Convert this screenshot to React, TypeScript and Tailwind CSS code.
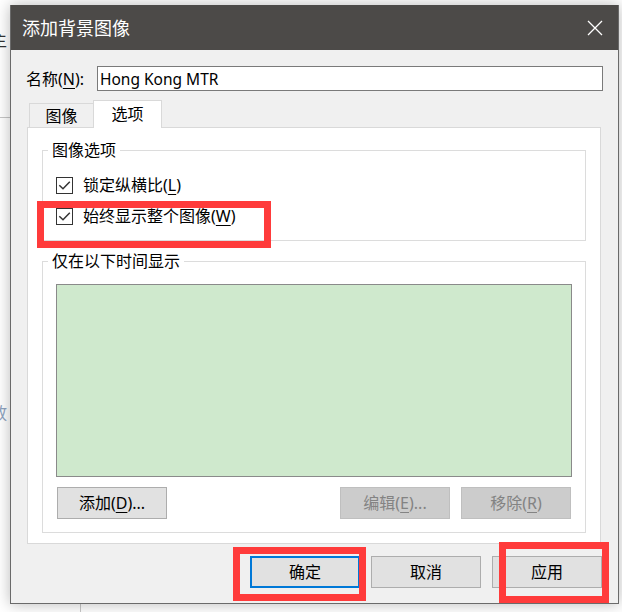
import React from "react"

const FONT = "font-['Noto_Sans','Noto_Sans_CJK_SC',sans-serif]"

function Key({ k }: { k: string }) {
  return <span className="underline decoration-1 underline-offset-[3px]">{k}</span>
}

function Check({ label }: { label: React.ReactNode }) {
  return (
    <div className="flex h-[22px] items-center">
      <svg width="17" height="17" viewBox="0 0 17 17" className="shrink-0">
        <rect x="0.5" y="0.5" width="16" height="16" fill="#ffffff" stroke="#333333" />
        <path d="M3.3 8.2 L7 11.8 L13.8 4.8" fill="none" stroke="#333333" strokeWidth="1.5" />
      </svg>
      <span className="ml-[10px] text-[16px] leading-[22px] text-black">{label}</span>
    </div>
  )
}

function Btn({
  children,
  disabled,
  primary,
  className = "",
}: {
  children: React.ReactNode
  disabled?: boolean
  primary?: boolean
  className?: string
}) {
  const look = disabled
    ? "border border-[#bfbfbf] bg-[#cccccc] text-[#838383]"
    : primary
      ? "border-2 border-[#0078d7] bg-[#e1e1e1] text-black"
      : "border border-[#adadad] bg-[#e1e1e1] text-black"
  return (
    <div className={`flex h-[32px] w-[110px] items-center justify-center text-[16px] leading-[20px] ${look} ${className}`}>
      {children}
    </div>
  )
}

export default function App() {
  return (
    <div className={`relative h-[612px] w-[622px] overflow-hidden bg-white ${FONT}`}>
      {/* page behind the dialog */}
      <div className="absolute left-0 top-[117px] h-px w-[12px] bg-[#c6c6c6]" />
      <div className="absolute left-[-9px] top-[30px] text-[16px] leading-[20px] text-[#333]">主</div>
      <div className="absolute left-[-9px] top-[403px] text-[16px] leading-[20px] text-[#8fa3bf]">放</div>
      <div className="absolute left-[80px] top-[600px] h-[12px] w-px bg-[#c8c8c8]" />

      {/* dialog window */}
      <div className="absolute left-[10px] top-[5px] flex h-[599px] w-[609px] flex-col border-x border-b border-[#6a6a6a] bg-[#f0f0f0] shadow-[0_0_14px_rgba(0,0,0,0.28)]">
        {/* title bar */}
        <div className="flex h-[45px] shrink-0 items-center bg-[#4c4a48] pl-[11px] pr-[15px]">
          <span className="text-[18px] leading-[24px] text-white">添加背景图像</span>
          <svg className="ml-auto" width="16" height="16" viewBox="0 0 16 16">
            <path d="M1 1 L15 15 M15 1 L1 15" stroke="#ffffff" strokeWidth="1.3" fill="none" />
          </svg>
        </div>

        {/* name */}
        <div className="mt-[16px] flex h-[25px] items-center">
          <span className="ml-[15px] w-[71px] text-[16px] leading-[20px] text-black">
            名称(<Key k="N" />):
          </span>
          <div className="flex h-[25px] w-[506px] items-center border border-[#7a7a7a] bg-white pl-[2px] text-[15.5px] leading-[20px] text-black">
            Hong Kong MTR
          </div>
        </div>

        {/* tabs */}
        <div className="ml-[16px] mt-[9px] flex items-end">
          <div className="ml-[2px] flex h-[24px] w-[64px] items-center justify-center border border-b-0 border-r-0 border-[#d9d9d9] bg-[#f0f0f0] text-[16px] leading-[20px] text-black">
            图像
          </div>
          <div className="relative z-10 -mb-px flex h-[28px] w-[69px] items-center justify-center border border-b-0 border-[#d9d9d9] bg-white pb-[2px] text-[16px] leading-[20px] text-black">
            选项
          </div>
        </div>

        {/* panel */}
        <div className="ml-[16px] flex h-[417px] w-[574px] flex-col border border-[#d9d9d9] bg-white pl-[14px]">
          <fieldset className="mt-[12px] w-[544px] border border-[#dcdcdc] pb-[13px] pl-[13px]">
            <legend className="-ml-[8px] px-[4px] text-[16px] leading-[20px] text-black">图像选项</legend>
            <div className="mt-[14px]">
              <Check label={<>锁定纵横比(<Key k="L" />)</>} />
            </div>
            <div className="mt-[9px]">
              <Check label={<>始终显示整个图像(<Key k="W" />)</>} />
            </div>
          </fieldset>

          <fieldset className="mt-[10px] w-[544px] border border-[#dcdcdc] pb-[13px] pl-[13px]">
            <legend className="-ml-[8px] px-[4px] text-[16px] leading-[20px] text-black">仅在以下时间显示</legend>
            <div className="mt-[13px] h-[193px] w-[516px] border border-[#8a8a8a] bg-[#cfe9cd]" />
            <div className="mt-[10px] flex">
              <Btn className="ml-[1px]">
                添加(<Key k="D" />)...
              </Btn>
              <Btn disabled className="ml-auto">
                编辑(<Key k="E" />)...
              </Btn>
              <Btn disabled className="ml-[11px] mr-[14px]">
                移除(<Key k="R" />)
              </Btn>
            </div>
          </fieldset>
        </div>

        {/* dialog buttons */}
        <div className="mr-[16px] mt-[12px] flex justify-end gap-[11px]">
          <Btn primary>确定</Btn>
          <Btn>取消</Btn>
          <Btn>应用</Btn>
        </div>
      </div>

      {/* red annotation frames */}
      <div className="absolute left-[37px] top-[201px] h-[47px] w-[234px] border-[7px] border-[#ff3b3b]" />
      <div className="absolute left-[233px] top-[547px] h-[54px] w-[133px] border-[7px] border-[#ff3b3b]" />
      <div className="absolute left-[499px] top-[542px] h-[61px] w-[110px] border-[7px] border-[#ff3b3b]" />
    </div>
  )
}
